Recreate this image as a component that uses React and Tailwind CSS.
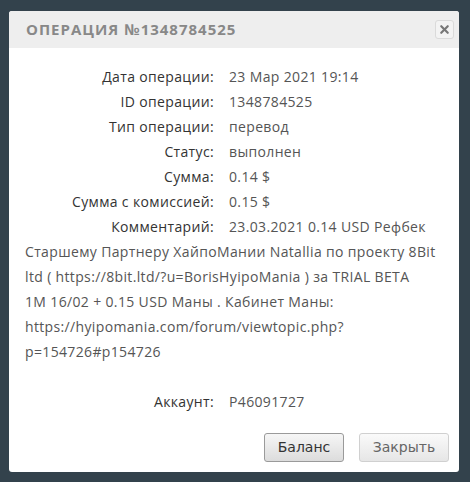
import { X } from 'lucide-react'

const rows = [
  ['Дата операции:', '23 Мар 2021 19:14'],
  ['ID операции:', '1348784525'],
  ['Тип операции:', 'перевод'],
  ['Статус:', 'выполнен'],
  ['Сумма:', '0.14 $'],
  ['Сумма с комиссией:', '0.15 $'],
]

const comment =
  '23.03.2021 0.14 USD Рефбек Старшему Партнеру ХайпоМании Natallia по проекту 8Bit ltd ( https://8bit.ltd/?u=BorisHyipoMania ) за TRIAL BETA 1M\u00a016/02 + 0.15 USD Маны . Кабинет Маны: https://hyipomania.com/forum/viewtopic.php?p=154726#p154726'

export default function App() {
  return (
    <div className="w-[470px] h-[482px] bg-[#33424c] pt-[11px] pl-[9px]" style={{ fontFamily: '"Open Sans", sans-serif' }}>
      <div className="w-[450px] h-[461px] bg-white rounded-[3px] flex flex-col overflow-hidden">
        {/* Header */}
        <div className="h-[37px] bg-[#eeeeee] flex items-center justify-between pl-[17px] pr-[5px]">
          <h1 className="text-[15px] font-bold tracking-[1px] text-[#888] uppercase">Операция №1348784525</h1>
          <button className="w-[19px] h-[19px] rounded-[3px] border border-[#dadada] bg-[#f3f3f3] flex items-center justify-center">
            <X size={13} strokeWidth={4} className="text-[#777]" />
          </button>
        </div>

        {/* Body */}
        <div className="flex-1 pl-[16px] pr-[15px] pt-[16px] text-[14px] leading-[25px] tracking-[0.35px]">
          {rows.map(([label, value]) => (
            <div key={label} className="flex">
              <span className="w-[189px] text-right text-[#333]">{label}</span>
              <span className="ml-[15px] text-[#555]">{value}</span>
            </div>
          ))}
          <p className="text-[#555]">
            <span className="inline-block w-[189px] mr-[15px] text-right text-[#333]">Комментарий:</span>
            {comment}
          </p>
          <div className="flex mt-[25px]">
            <span className="w-[189px] text-right text-[#333]">Аккаунт:</span>
            <span className="ml-[15px] text-[#555]">P46091727</span>
          </div>
        </div>

        {/* Footer */}
        <div className="flex justify-end gap-[15px] pr-[10px] pb-[10px] text-[14px]" style={{ fontFamily: '"DejaVu Sans", sans-serif' }}>
          <button className="w-[80px] h-[29px] rounded-[3px] border border-[#9a9a9a] bg-gradient-to-b from-[#f6f6f6] to-[#dcdcdc] text-[#333]">
            Баланс
          </button>
          <button className="w-[90px] h-[29px] rounded-[3px] border border-[#d0d0d0] bg-gradient-to-b from-[#fafafa] to-[#e6e6e6] text-[#666]">
            Закрыть
          </button>
        </div>
      </div>
    </div>
  )
}
